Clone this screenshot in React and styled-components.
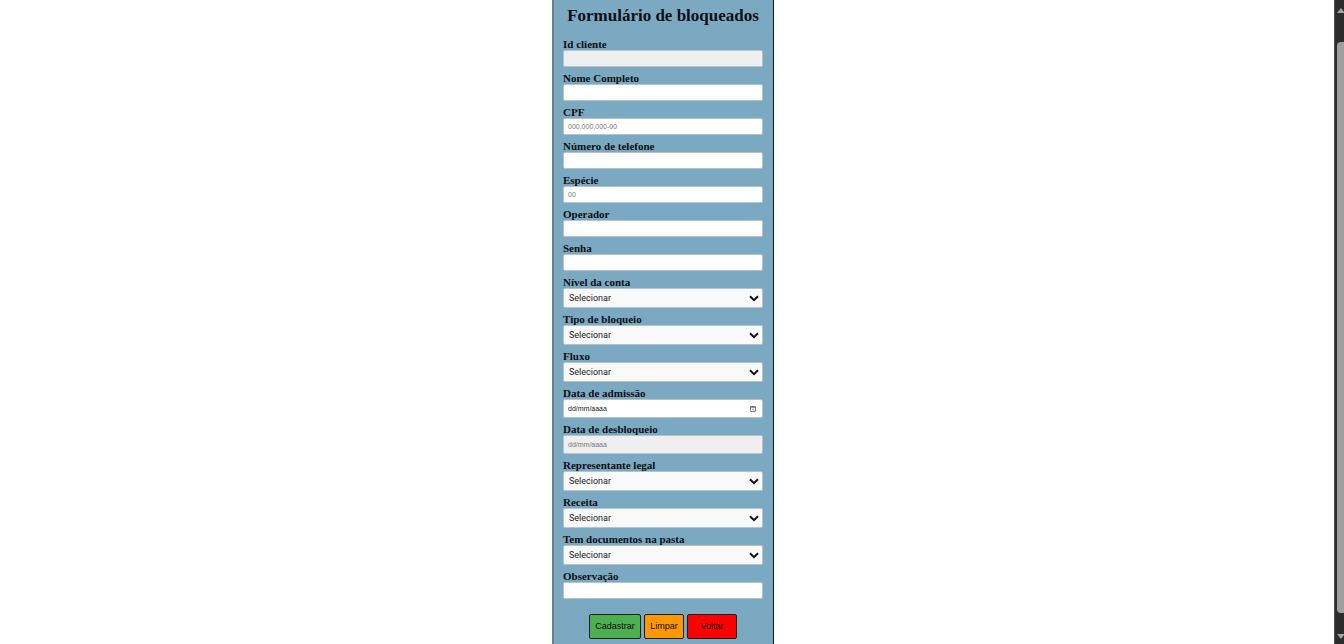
import React from "react";
import styled, { createGlobalStyle, css } from "styled-components";

const GlobalStyle = createGlobalStyle`
  * { box-sizing: border-box; }
  body { margin: 0; background: #fff; color: #0b0f12; }
`;

const Page = styled.div`
  display: flex;
  min-height: 100vh;
`;

const Main = styled.main`
  flex: 1;
  display: flex;
  justify-content: center;
  padding-right: 8px;
`;

const Form = styled.form`
  display: flex;
  flex-direction: column;
  gap: 6px;
  width: 222px;
  padding: 5px 10px 5px 9px;
  background: #7ca9c2;
  border: solid #10181d;
  border-width: 0 1px 0 2px;
  border-left-color: #66808f;
  font-family: "Liberation Serif", "Times New Roman", serif;
`;

const Title = styled.h1`
  margin: 0 0 6px;
  font-size: 17px;
  line-height: 22px;
  text-align: center;
  white-space: nowrap;
  align-self: center;
`;

const Field = styled.div`
  display: flex;
  flex-direction: column;
`;

const Label = styled.label`
  font-size: 11px;
  line-height: 11px;
  font-weight: bold;
`;

const control = css`
  width: 100%;
  margin: 0;
  border: 1px solid #b4c3cc;
  border-radius: 2px;
  font-family: "Liberation Sans", Arial, sans-serif;
`;

const TextInput = styled.input`
  ${control}
  height: ${(p) => (p.$date ? 19 : 17)}px;
  padding: 0 4px;
  font-size: 7px;
  background: #fff;

  &::placeholder {
    color: ${(p) => (p.$date ? "#222" : "#777")};
    opacity: 1;
  }
  &:disabled {
    background: #efefef;
  }
  &:disabled::placeholder {
    color: #777;
  }
`;

const ControlWrap = styled.div`
  position: relative;
  display: flex;
`;

const Select = styled.select`
  ${control}
  height: 20px;
  padding: 0 20px 0 5px;
  appearance: none;
  background: #f9f9f9;
  color: #222;
  font-family: Roboto, "Liberation Sans", sans-serif;
  font-size: 9px;
`;

const Chevron = styled.svg`
  position: absolute;
  right: 4px;
  top: 7px;
  width: 10px;
  height: 7px;
  pointer-events: none;
`;

const DateButton = styled.button`
  position: absolute;
  right: 7px;
  top: 6px;
  width: 6px;
  height: 7px;
  padding: 0;
  border: 0;
  background: none;

  svg { display: block; }
`;

const Actions = styled.div`
  display: flex;
  justify-content: center;
  gap: 3px;
  margin-top: 9px;
`;

const Button = styled.button`
  width: ${(p) => p.$width}px;
  height: 25px;
  padding: 0 0 2px;
  border: 1px solid #14211a;
  border-radius: 2px;
  background: ${(p) => p.$color};
  color: #0c0c0c;
  font-family: "Liberation Sans", Arial, sans-serif;
  font-size: 9px;
`;

const ScrollTrack = styled.div`
  display: flex;
  flex-direction: column;
  align-items: flex-end;
  width: 10px;
  height: 100vh;
  padding: 8px 0 5px;
  background: #2c2c2c;
  border-left: 1px solid #555;
`;

const ScrollThumb = styled.div`
  flex: 1;
  width: 7px;
  margin: 29px 0 21px;
  border-radius: 4px 0 0 4px;
  background: #9f9f9f;
`;

const fields = [
  { id: "id", label: "Id cliente", disabled: true },
  { id: "nome", label: "Nome Completo" },
  { id: "cpf", label: "CPF", placeholder: "000.000.000-00" },
  { id: "telefone", label: "Número de telefone" },
  { id: "especie", label: "Espécie", placeholder: "00" },
  { id: "operador", label: "Operador" },
  { id: "senha", label: "Senha", type: "password" },
  { id: "nivel", label: "Nível da conta", kind: "select" },
  { id: "bloqueio", label: "Tipo de bloqueio", kind: "select" },
  { id: "fluxo", label: "Fluxo", kind: "select" },
  { id: "admissao", label: "Data de admissão", kind: "date" },
  { id: "desbloqueio", label: "Data de desbloqueio", kind: "date", disabled: true },
  { id: "representante", label: "Representante legal", kind: "select" },
  { id: "receita", label: "Receita", kind: "select" },
  { id: "documentos", label: "Tem documentos na pasta", kind: "select" },
  { id: "observacao", label: "Observação" },
];

function SelectControl({ id }) {
  return (
    <ControlWrap>
      <Select id={id} defaultValue="">
        <option value="">Selecionar</option>
      </Select>
      <Chevron viewBox="0 0 10 7" aria-hidden="true">
        <path d="M1 1.3 5 5.1 9 1.3" fill="none" stroke="#111" strokeWidth="2" />
      </Chevron>
    </ControlWrap>
  );
}

function DateControl({ id, disabled }) {
  return (
    <ControlWrap>
      <TextInput id={id} type="text" $date placeholder="dd/mm/aaaa" disabled={disabled} />
      {!disabled && (
        <DateButton type="button" aria-label="Abrir calendário">
          <svg width="6" height="7" viewBox="0 0 6 7">
            <rect x="0.5" y="1.5" width="5" height="5" rx="0.5" fill="#eee" stroke="#777" />
            <path d="M0.5 2.2h5" stroke="#666" />
            <path d="M2 4.5h2" stroke="#aaa" />
          </svg>
        </DateButton>
      )}
    </ControlWrap>
  );
}

function FormField({ id, label, kind, ...rest }) {
  return (
    <Field>
      <Label htmlFor={id}>{label}</Label>
      {kind === "select" && <SelectControl id={id} />}
      {kind === "date" && <DateControl id={id} {...rest} />}
      {!kind && <TextInput id={id} type="text" {...rest} />}
    </Field>
  );
}

export default function App() {
  return (
    <Page>
      <GlobalStyle />
      <Main>
        <Form>
          <Title>Formulário de bloqueados</Title>
          {fields.map((f) => (
            <FormField key={f.id} {...f} />
          ))}
          <Actions>
            <Button type="submit" $width={52} $color="#4caf50">Cadastrar</Button>
            <Button type="reset" $width={40} $color="#ff9800">Limpar</Button>
            <Button type="button" $width={50} $color="#ff0000">Voltar</Button>
          </Actions>
        </Form>
      </Main>
      <ScrollTrack aria-hidden="true">
        <svg width="7" height="5" viewBox="0 0 7 5">
          <path d="M0 5 4 0 7 4V5Z" fill="#a5a5a5" />
        </svg>
        <ScrollThumb />
        <svg width="7" height="5" viewBox="0 0 7 5">
          <path d="M0 0H7V1L4 5Z" fill="#a5a5a5" />
        </svg>
      </ScrollTrack>
    </Page>
  );
}
